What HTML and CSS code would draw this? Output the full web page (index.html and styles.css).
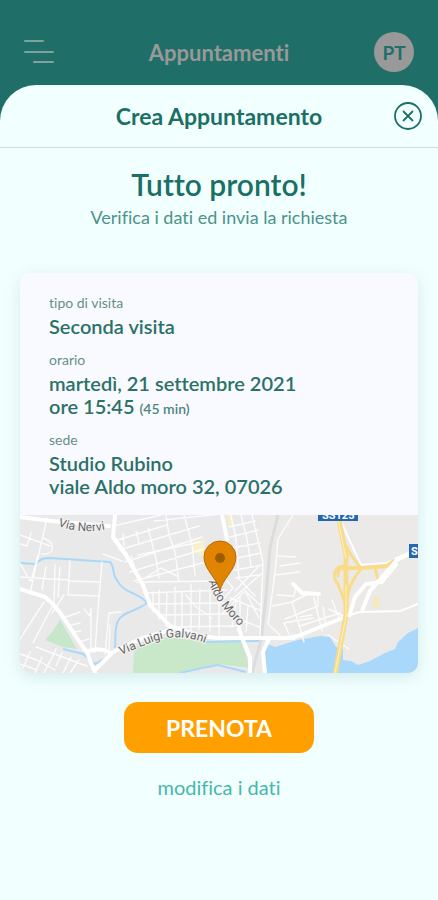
FILE: index.html
```html
<!DOCTYPE html>
<html lang="it">
<head>
<meta charset="utf-8">
<meta name="viewport" content="width=device-width, initial-scale=1">
<title>Crea Appuntamento</title>
<link rel="stylesheet" href="styles.css">
</head>
<body>
<header class="topbar">
  <button class="menu" type="button" aria-label="Menu">
    <svg width="30" height="26" viewBox="0 0 30 26"><path d="M1 2H19M1 13H29M10 23H29" fill="none" stroke="currentColor" stroke-width="2" stroke-linecap="round"/></svg>
  </button>
  <p class="topbar-title">Appuntamenti</p>
  <button class="avatar" type="button">PT</button>
</header>
<main class="sheet">
  <div class="sheet-head">
    <h1 class="sheet-title">Crea Appuntamento</h1>
    <button class="close" type="button" aria-label="Chiudi">
      <svg width="28" height="28" viewBox="0 0 28 28" fill="none" stroke="currentColor" stroke-width="1.800" stroke-linecap="round"><circle cx="14" cy="14" r="13"/><path d="M9.500 9.500L18.500 18.500M18.500 9.500L9.500 18.500"/></svg>
    </button>
  </div>
  <div class="content">
    <h2 class="heading">Tutto pronto!</h2>
    <p class="subtitle">Verifica i dati ed invia la richiesta</p>
    <section class="card">
      <dl class="details">
        <div class="detail"><dt>tipo di visita</dt><dd>Seconda visita</dd></div>
        <div class="detail"><dt>orario</dt><dd>martedì, 21 settembre 2021<br>ore 15:45 <span class="duration">(45 min)</span></dd></div>
        <div class="detail"><dt>sede</dt><dd>Studio Rubino<br>viale Aldo moro 32, 07026</dd></div>
      </dl>
      <svg class="map" viewBox="0 0 398 158" role="img" aria-label="Mappa della sede">
        <rect width="398" height="158" fill="#e9e9e9"/>
        <path d="M238 0H398V113L378 127L365 138L338 150L323 145L310 122L278 125L240 124Z" fill="#ebeae9"/>
        <path d="M207 0H211L213 10L208 12ZM172 27L184 25V42L173 37Z" fill="#f8efcb"/>
        <path d="M40 105L57 134L43 132L25 125L32 117Z" fill="#c6e7ca"/>
        <path d="M113 157L114 138L119 129L147 122L187 127L221 125L230 153L198 149L160 158H113Z" fill="#c9e8ca"/>
        <path d="M245 128L255 132L278 125L300 121L310 122L316 132L323 134V145L331 146L338 150L350 146L365 138L375 134L378 127L388 118L398 113V158H243Z" fill="#a9d8fb"/>
        <path d="M0 48L15 49C20 46 20 43 30 43L90 47C95 52 92 60 97 65C103 79 119 77 127 88C115 97 102 97 98 106C94 115 96 123 95 133M43 134L63 139L75 149L91 140M160 158L182 153L198 150L226 157M182 127L240 126" fill="none" stroke="#a9d8fb" stroke-width="2"/>
        <path d="M258 0L250 33L246 82L241 125L232 158" fill="none" stroke="#dcdcdc" stroke-width="3"/>
        <g fill="none" stroke="#fff" stroke-linecap="round" stroke-linejoin="round">
          <g stroke-width="1.400" stroke-opacity="0.850">
            <path d="M27 3L14 60L10 79M11 18L7 31L0 29M0 20L30 31M24 23C37 29 34 40 22 39M18 40L11 66M0 62L48 65M50 46L48 80L80 81M82 47L78 94L75 137M48 66L80 67M35 50L34 89M40 52L38 82M26 52L22 74M0 48L10 66M13 128L34 88M0 124L24 87M44 80L32 98M46 102L60 97M51 110L60 108M54 117L61 116M59 127L69 124M85 139L89 98L101 97M64 94L70 101L71 93V136M90 110L89 136M75 137L62 135"/>
            <path d="M0 139L17 145L35 155M10 137L3 153M22 142L15 158M30 146L24 158M36 134L29 149M42 138L36 151M51 142L43 158M59 145L50 158M16 132L67 151M0 149L17 155"/>
            <path d="M94 26L147 10M99 35L179 11M105 47L182 22M110 57L184 34M114 66L186 47M124 67L199 66M118 40L180 27M103 19L104 31M116 16L119 28M128 13L134 36M146 0L149 20L155 37L159 67M164 0L172 29L175 60M93 11L141 0M134 6L201 -1M83 39L102 46M111 41L117 60M135 38L139 63M124 78L207 75M132 89L207 88M139 100L208 99M147 112L220 111M133 79V97M139 75V104M147 77L146 111M155 72V112M162 78V116M171 69V115M180 74L179 114M190 74V116M199 76V121M117 68L141 53L157 61M166 80L175 91L192 103"/>
            <path d="M209 12L235 6M210 22L238 15M211 33L240 28M213 44L241 38M215 55L243 50M216 63L239 60M215 76L240 50M208 88L241 59M203 98L225 76L240 90M225 76L239 103M210 83L242 96M211 101L239 112M216 87L212 112M220 82V122M228 90L226 117M211 0L216 24L219 64L235 81M221 0L227 24L231 51M232 0L243 47L240 122M201 87L213 73L202 60"/>
            <path d="M273 0L258 24L255 58L248 109L260 120M257 41L276 42M260 51L280 48M256 60L279 57M257 80L274 81L276 72M253 91L272 87L279 110L284 127M272 87L288 79M265 104L298 91L298 78L282 78L275 69M294 83L302 116M280 111L320 98M269 119L264 108L293 103M312 85L319 103M309 94L325 102M303 92L306 111M308 120L329 134M280 102L292 100"/>
          </g>
          <path d="M0 2L31 6L89 11M0 74L25 82C42 95 51 117 67 137L75 158M95 0L93 22L106 40M67 137C75 132 89 135 91 139L75 155L93 137L120 124L147 116M202 0L207 24M219 114L222 123L230 142V158M245 158L243 137L249 124" stroke-width="4"/>
          <path d="M93 22L106 40L123 70L130 90L150 111L180 121L198 123L265 123L278 121L325 102" stroke-width="4"/>
          <path d="M326 101L340 97L380 96L398 89" stroke-width="2"/>
          <path d="M273 69L282 78L299 79M262 123H274" stroke-width="4"/>
        </g>
        <path d="M318 0L329 24L341 50L367 48L398 33" fill="none" stroke="#fff" stroke-width="2"/>
        <g fill="none" stroke="#f8dc89" stroke-linecap="round" stroke-linejoin="round">
          <path d="M318 0L326 40V64L326 100L315 160" stroke-width="5"/>
          <path d="M326 53H341L367 51L374 46" stroke-width="4"/>
          <path d="M322 24L331 40L340 52M326 51C313 50 312 63 318 69L326 90M318 61C317 54 323 52 326 54M326 90C327 75 334 62 341 54M355 53L358 64M374 48L366 64" stroke-width="3"/>
        </g>
        <path d="M318 4L326 44M326 70V101L315 158" stroke="#fff2bd" stroke-width="1" fill="none"/>
        <path d="M398 35L377 45L350 76L342 96M377 48L362 67L346 69L335 82L329 102M358 66L352 73" stroke="#fff" stroke-width="4" stroke-linejoin="round" fill="none"/>
        <path d="M352 92L355 80L360 82L359 93Z" fill="#f6e8bf"/>
        <defs>
          <path id="nervi" d="M38 11C52 16 70 19 92 13"/>
          <path id="galvani" d="M101 140L125 130C145 121 162 119 188 129"/>
          <path id="moro" d="M189 66C191 79 202 93 221 113"/>
          <clipPath id="frame"><rect width="398" height="158"/></clipPath>
        </defs>
        <g class="street">
          <text><textPath href="#nervi">Via Nervi</textPath></text>
          <text><textPath href="#galvani">Via Luigi Galvani</textPath></text>
          <text><textPath href="#moro">Aldo Moro</textPath></text>
        </g>
        <g clip-path="url(#frame)">
          <rect x="298" y="-9" width="40" height="15" fill="#2367b0"/>
          <text class="route" x="302" y="4">SS125</text>
          <rect x="389" y="29" width="36" height="14" fill="#2367b0"/>
          <text class="route" x="391" y="40">S</text>
        </g>
        <path d="M200 76C198 64 184 55 184 42A16 16 0 0 1 216 42C216 55 202 64 200 76Z" fill="#e18500" stroke="#b76b00" stroke-width="1"/>
        <circle cx="200" cy="43" r="5" fill="#9c5c00"/>
      </svg>
    </section>
    <button class="primary" type="button">PRENOTA</button>
    <a class="edit" href="#">modifica i dati</a>
  </div>
</main>
</body>
</html>
```
FILE: styles.css
```css
* {
  box-sizing: border-box;
}

body {
  margin: 0;
  min-height: 100vh;
  display: flex;
  flex-direction: column;
  background: linear-gradient(#1f6f68 160px, #f2ffff 160px);
  color: #1b7065;
  font-family: Lato, sans-serif;
  font-variant-ligatures: none;
}

h1, h2, p, dl, dd {
  margin: 0;
}

button {
  padding: 0;
  border: 0;
  background: none;
  color: inherit;
  font-family: inherit;
  cursor: pointer;
}

.topbar {
  display: grid;
  grid-template-columns: 40px 1fr 40px;
  align-items: center;
  padding: 32px 24px 13px;
  color: #999;
}

.menu {
  display: flex;
  color: #82a09d;
}

.topbar-title {
  font-size: 22px;
  font-weight: 700;
  text-align: center;
}

.avatar {
  width: 40px;
  height: 40px;
  border-radius: 50%;
  background: #999;
  color: #1f6f68;
  font-size: 19px;
  font-weight: 700;
}

.sheet {
  flex: 1;
  border-radius: 36px 36px 0 0;
  background: #f2ffff;
}

.sheet-head {
  display: grid;
  grid-template-columns: 28px 1fr 28px;
  align-items: center;
  height: 63px;
  padding: 0 16px;
  border-bottom: 1px solid #d0dcdc;
}

.sheet-title {
  grid-column: 2;
  font-size: 23px;
  font-weight: 700;
  text-align: center;
}

.close {
  display: flex;
}

.content {
  display: flex;
  flex-direction: column;
  align-items: center;
  padding: 18px 20px;
}

.heading {
  font-size: 30px;
  font-weight: 600;
  line-height: 36px;
}

.subtitle {
  color: #4c9388;
  font-size: 18px;
  line-height: 30px;
}

.card {
  width: 100%;
  margin-top: 41px;
  overflow: hidden;
  border-radius: 10px;
  background: #f9faff;
  box-shadow: 0 4px 16px rgba(31, 111, 104, 0.14);
}

.details {
  display: flex;
  flex-direction: column;
  gap: 10px;
  padding: 18px 29px 17px;
}

dt {
  color: #668f88;
  font-size: 14px;
  line-height: 24px;
}

dd {
  color: #2b7168;
  font-size: 20px;
  font-weight: 600;
  line-height: 23px;
}

.duration {
  color: #4b857c;
  font-size: 14px;
  line-height: 1;
}

.map {
  display: block;
  width: 100%;
}

.street {
  fill: #666;
  stroke: #f4f4f4;
  stroke-width: 2px;
  paint-order: stroke;
  font-family: Roboto, sans-serif;
  font-size: 12px;
}

.route {
  fill: #fff;
  font-family: Roboto, sans-serif;
  font-size: 11px;
  font-weight: 700;
}

.primary {
  width: 190px;
  height: 51px;
  margin-top: 29px;
  border-radius: 14px;
  background: #ffa000;
  color: #fff;
  font-size: 23px;
  font-weight: 700;
}

.edit {
  margin-top: 22px;
  color: #45b8a8;
  font-size: 20px;
  line-height: 24px;
  text-decoration: none;
}
```
